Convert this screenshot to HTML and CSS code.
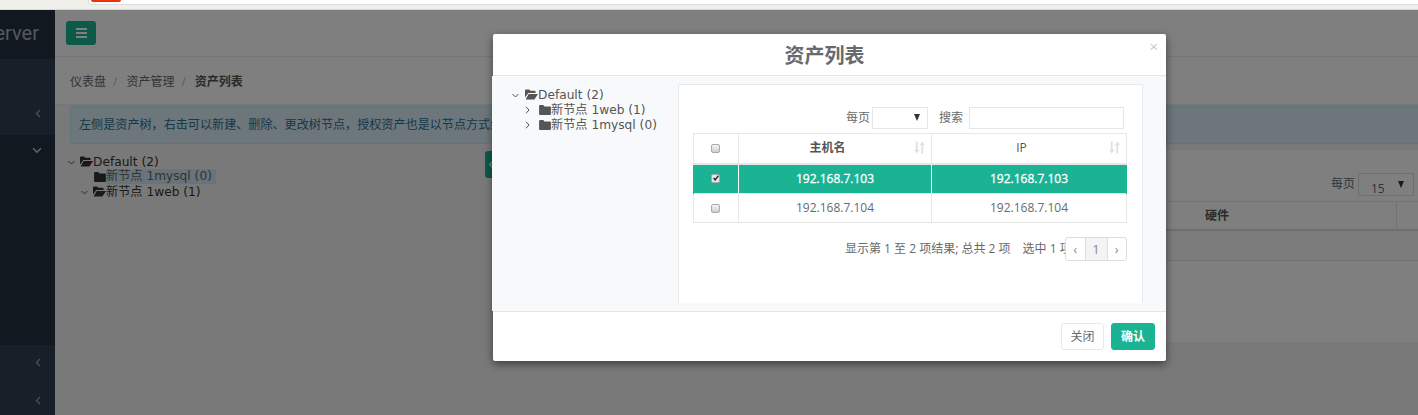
FILE: index.html
```html
<!DOCTYPE html>
<html lang="zh">
<head>
<meta charset="utf-8">
<title>资产列表</title>
<link rel="stylesheet" href="styles.css">
</head>
<body>
<svg class="defs" width="0" height="0" aria-hidden="true">
  <defs>
    <symbol id="folder-open" viewBox="0 0 14 11"><path d="M1 0h3.6l1.2 1.5h4.7c.5 0 .9.4.9.9V4H3.6L0 8.6V1c0-.6.4-1 1-1zM3.9 4.9H14L10.5 10.4c-.2.4-.6.6-1 .6H.6z"/></symbol>
    <symbol id="folder" viewBox="0 0 13 11"><path d="M1 0h3.6l1.3 1.6H12c.6 0 1 .4 1 1V10c0 .6-.4 1-1 1H1c-.6 0-1-.4-1-1V1c0-.6.4-1 1-1z"/></symbol>
    <symbol id="down" viewBox="0 0 7 5"><path d="M.5 1L3.5 4l3-3" fill="none" stroke="currentColor" stroke-width="1"/></symbol>
    <symbol id="right" viewBox="0 0 5 8"><path d="M1 .7L4 4 1 7.3" fill="none" stroke="currentColor" stroke-width="1"/></symbol>
    <symbol id="chev-down" viewBox="0 0 9 6"><path d="M1 1l3.5 3.5L8 1" fill="none" stroke="currentColor" stroke-width="1.3"/></symbol>
    <symbol id="left" viewBox="0 0 6 9"><path d="M5 1L1.5 4.5 5 8" fill="none" stroke="currentColor" stroke-width="1.3"/></symbol>
    <symbol id="sort" viewBox="0 0 12 13"><path d="M2 0h2v9h2l-3 4-3-4h2zM8 13h2V4h2L9 0 6 4h2z"/></symbol>
  </defs>
</svg>

<div class="browser-bar"><div class="address"><span class="favicon"></span></div></div>

<div class="app">
  <aside class="sidebar">
    <div class="logo">Jumpserver</div>
    <div class="nav-group">
      <div class="nav-item"><svg class="nav-icon"><use href="#left"/></svg></div>
    </div>
    <div class="nav-active">
      <div class="nav-item"><svg class="nav-icon-down"><use href="#chev-down"/></svg></div>
    </div>
    <div class="nav-group nav-rest">
      <div class="nav-item"><svg class="nav-icon"><use href="#left"/></svg></div>
      <div class="nav-item"><svg class="nav-icon"><use href="#left"/></svg></div>
    </div>
  </aside>

  <main class="main">
    <header class="topbar">
      <button class="menu-btn" type="button"><span></span><span></span><span></span></button>
    </header>
    <nav class="crumbs">
      <span>仪表盘</span><i>/</i><span>资产管理</span><i>/</i><strong>资产列表</strong>
    </nav>
    <div class="content">
      <div class="alert">左侧是资产树，右击可以新建、删除、更改树节点，授权资产也是以节点方式组织的，右侧是属于该节点下的资产</div>
      <div class="split">
        <div class="page-tree">
          <div class="tree-row"><svg class="arrow"><use href="#down"/></svg><svg class="ficon-o"><use href="#folder-open"/></svg>Default (2)</div>
          <div class="tree-row lvl"><svg class="ficon"><use href="#folder"/></svg><span class="picked">新节点 1mysql (0)</span></div>
          <div class="tree-row lvl-arrow"><svg class="arrow"><use href="#down"/></svg><svg class="ficon-o"><use href="#folder-open"/></svg>新节点 1web (1)</div>
        </div>
        <div class="toggle"><svg class="toggle-icon"><use href="#left"/></svg></div>
        <section class="panel">
          <div class="panel-tools">
            <span>每页</span><div class="page-select"><span class="val">15</span><b class="tri"></b></div>
          </div>
          <div class="back-table">
            <div class="back-head"><span class="hw">硬件</span><span class="last"></span></div>
            <div class="back-row"></div>
          </div>
        </section>
      </div>
    </div>
  </main>
</div>

<div class="backdrop"></div>

<div class="modal">
  <header class="modal-head">
    <h4>资产列表</h4>
    <span class="close">×</span>
  </header>
  <div class="modal-body">
    <div class="modal-tree">
      <div class="tree-row"><svg class="arrow"><use href="#down"/></svg><svg class="ficon-o"><use href="#folder-open"/></svg>Default (2)</div>
      <div class="tree-row sub"><svg class="arrow-r"><use href="#right"/></svg><svg class="ficon"><use href="#folder"/></svg>新节点 1web (1)</div>
      <div class="tree-row sub"><svg class="arrow-r"><use href="#right"/></svg><svg class="ficon"><use href="#folder"/></svg>新节点 1mysql (0)</div>
    </div>
    <div class="modal-panel">
      <div class="filters">
        <span>每页</span><div class="small-select"><b class="tri"></b></div>
        <span class="search-label">搜索</span><div class="search-box"></div>
      </div>
      <table class="grid">
        <thead>
          <tr>
            <th class="c-check"><span class="check"></span></th>
            <th class="c-host">主机名<svg class="sort"><use href="#sort"/></svg></th>
            <th>IP<svg class="sort"><use href="#sort"/></svg></th>
          </tr>
        </thead>
        <tbody>
          <tr class="selected">
            <td class="c-box"><span class="check on"><svg viewBox="0 0 10 10"><path d="M2 5l2 2.4L8 2" fill="none" stroke="#222" stroke-width="1.8"/></svg></span></td>
            <td>192.168.7.103</td><td>192.168.7.103</td>
          </tr>
          <tr>
            <td class="c-box"><span class="check"></span></td>
            <td>192.168.7.104</td><td>192.168.7.104</td>
          </tr>
        </tbody>
      </table>
      <div class="table-foot">
        <div class="info">显示第 1 至 2 项结果; 总共 2 项<span class="sel-count">选中 1 项</span></div>
        <div class="pager"><span>‹</span><span class="cur">1</span><span>›</span></div>
      </div>
    </div>
  </div>
  <footer class="modal-foot">
    <button class="btn" type="button">关闭</button>
    <button class="btn primary" type="button">确认</button>
  </footer>
</div>
</body>
</html>
```

FILE: styles.css
```css
* { box-sizing: border-box; }
html, body { height: 100%; }
body {
  margin: 0;
  width: 1418px;
  height: 415px;
  overflow: hidden;
  position: relative;
  display: flex;
  flex-direction: column;
  background: #f3f3f4;
  color: #676a6c;
  font: 13px/18px "Open Sans", "Noto Sans CJK SC", sans-serif;
}
.defs { position: absolute; }
svg { fill: currentColor; display: block; flex: none; }

/* browser strip */
.browser-bar { height: 10px; flex: none; background: #f0efeb; padding-left: 88px; border-bottom: 1px solid #d8d8d3; }
.address { height: 5px; background: #fff; border: 1px solid #dcdcdc; border-top: 0; border-radius: 0 0 4px 4px; width: 1340px; }
.favicon { display: block; width: 30px; height: 2px; background: #f0300a; margin-left: 2px; border-radius: 0 0 2px 2px; }

/* app */
.app { flex: 1; display: flex; min-height: 0; }
.sidebar { width: 55px; flex: none; background: #2f4050; color: #a7b1c2; display: flex; flex-direction: column; overflow: hidden; }
.logo { height: 49px; background: #243140; font: 20px/47px Roboto, sans-serif; white-space: nowrap; display: flex; justify-content: flex-end; padding-right: 16px; }
.nav-group { background: #2f4050; height: 76px; padding-top: 45px; }
.nav-active { background: #243140; height: 210px; }
.nav-rest { height: 70px; padding-top: 0; }
.nav-item { height: 38px; display: flex; align-items: center; justify-content: flex-end; padding-right: 14px; }
.nav-group .nav-item { color: #87a0c0; height: 19px; }
.nav-active .nav-item { color: #c4cbd6; padding-right: 13px; height: 30px; }
.nav-rest .nav-item { height: 38px; }
.nav-rest .nav-item:first-child { margin-top: -2px; }
.nav-icon { width: 6px; height: 9px; }
.nav-icon-down { width: 10px; height: 7px; }

.main { flex: 1; min-width: 0; display: flex; flex-direction: column; }
.topbar { height: 47px; flex: none; background: #fff; border-bottom: 1px solid #e7eaec; padding: 11px; }
.menu-btn { width: 30px; height: 24px; background: #1ab394; border: 0; border-radius: 3px; padding: 7px 9px 7px 10px; display: flex; flex-direction: column; gap: 2px; }
.menu-btn span { display: block; height: 2px; width: 100%; background: #fff; }
.crumbs { height: 48px; flex: none; background: #fff; border-bottom: 1px solid #e7eaec; padding: 2px 15px 0; display: flex; align-items: center; gap: 7px; font-size: 12px; color: #676a6c; }
.crumbs i { font-style: normal; color: #bbb; margin-right: 2px; }
.crumbs strong { font-weight: 700; color: #555; }
.content { flex: 1; min-height: 0; padding: 0 0 0 15px; }
.alert { height: 38px; margin-top: 1px; background: #d9edf7; border: 1px solid #bce8f1; border-radius: 3px; padding: 0 8px; line-height: 36px; font-size: 12.1px; color: #31708f; white-space: nowrap; overflow: hidden; margin-right: -4px; }
.split { display: flex; padding-top: 7px; align-items: flex-start; }
.page-tree { width: 417px; flex: none; padding-top: 3px; margin-left: -2px; }
.tree-row { height: 15px; display: flex; align-items: center; font: 12.2px/17px "DejaVu Sans", "Noto Sans CJK SC", sans-serif; color: #333; white-space: nowrap; padding-top: 1px; }
.arrow { width: 7px; height: 5px; color: #555; margin-right: 5px; }
.arrow-r { width: 5px; height: 8px; color: #555; margin-right: 9px; }
.ficon-o { width: 13px; height: 11px; color: #333; margin-top: -1px; }
.ficon { width: 12px; height: 10px; color: #333; margin-top: -1px; }
.lvl { padding-left: 26px; }
.lvl-arrow { padding-left: 13px; }
.picked { background: #d0e8f5; padding-right: 4px; color: #666; height: 15px; line-height: 15px; margin-top: -1px; }
.toggle { width: 8px; height: 27px; background: #1ab394; border-radius: 3px 0 0 3px; flex: none; padding: 9px 0 0 3px; color: #fff; }
.toggle-icon { width: 6px; height: 9px; }
.panel { flex: 1; min-width: 0; background: #fff; margin: -1px 0 0 4px; height: 192px; padding-top: 22px; }
.panel-tools { display: flex; justify-content: flex-end; align-items: center; height: 24px; padding-right: 4px; gap: 3px; font-size: 12px; }
.page-select { width: 56px; height: 23px; border: 1px solid #ddd; display: flex; justify-content: space-between; padding: 6px 9px 0 12px; font-size: 12px; }
.page-select .val { line-height: 18px; }
.page-select .tri { margin-top: 1px; }
.tri { display: block; width: 0; height: 0; border: 3.5px solid transparent; border-top: 7px solid #333; border-bottom: 0; }
.back-table { margin-top: 5px; }
.back-head { height: 30px; border-top: 1px solid #e7e7e7; border-bottom: 2px solid #ddd; position: relative; display: flex; font-weight: 700; font-size: 12px; justify-content: flex-end; }
.hw { line-height: 27px; margin-right: 189px; color: #555; }
.last { position: absolute; right: 21px; top: 0; bottom: 0; border-left: 1px solid #e7e7e7; }
.back-row { height: 30px; background: #f9f9f9; border-bottom: 1px solid #e7e7e7; }

/* overlay */
.backdrop { position: absolute; left: 0; right: 0; top: 10px; bottom: 0; background: rgba(0, 0, 0, .5); }
.modal { position: absolute; left: 493px; top: 34px; width: 673px; height: 327px; background: #fff; box-shadow: 0 3px 9px rgba(0, 0, 0, .5); display: flex; flex-direction: column; border-radius: 2px; }
.modal-head { height: 42px; flex: none; border-bottom: 1px solid #e5e5e5; position: relative; text-align: center; }
.modal-head h4 { margin: 0; padding-right: 10px; font-size: 20px; line-height: 43px; font-weight: 700; color: #676a6c; }
.close { position: absolute; right: 8px; top: 3px; font-size: 15px; line-height: 18px; color: #c9c9c9; }
.modal-body { height: 235px; flex: none; background: #f8f9fb; display: flex; margin-left: -1px; }
.modal-tree { width: 186px; flex: none; padding: 11px 0 0 20px; }
.modal-tree .tree-row { color: #555; }
.modal-tree .arrow { margin-right: 6px; }
.modal-tree .sub { padding-left: 13px; }
.modal-tree .ficon-o, .modal-tree .ficon { color: #555; }
.modal-panel { width: 465px; height: 219px; margin-top: 8px; background: #fff; border: 1px solid #e7eaec; border-bottom: 0; padding: 22px 15px 0 14px; }
.filters { display: flex; align-items: center; justify-content: flex-end; height: 23px; margin-top: -1px; padding-right: 3px; font-size: 12px; color: #676a6c; }
.small-select { width: 56px; height: 22px; margin-left: 2px; border: 1px solid #e5e6e7; display: flex; justify-content: flex-end; align-items: center; padding-right: 7px; }
.search-label { margin-left: 11px; }
.search-box { width: 155px; height: 22px; margin-left: 6px; border: 1px solid #e5e6e7; }
.grid { width: 434px; margin-top: 4px; border-collapse: collapse; table-layout: fixed; font-size: 12px; }
.grid th, .grid td { border: 1px solid #e7e7e7; text-align: center; padding: 0; height: 29px; }
.grid th { height: 30px; border-bottom: 2px solid #e7e7e7; position: relative; color: #555; font-weight: 700; padding-right: 15px; }
.grid th.c-check, .grid td.c-box { padding-right: 1px; }
.grid th:last-child { font-weight: 400; }
.c-check { width: 45px; }
.c-host { width: 193px; }
.sort { position: absolute; right: 6px; top: 7px; width: 11px; height: 13px; color: #e0e0e0; }
.grid .selected td { height: 30px; background: #1ab394; color: #fff; -webkit-text-stroke: .3px #fff; border-top: 0; border-left-color: #fff; border-right-color: #fff; border-bottom: 0; }
.grid .selected td:first-child { border-left-color: #1ab394; }
.grid .selected td:last-child { border-right-color: #1ab394; }
.check { display: block; width: 9px; height: 9px; margin: 0 auto; border: 1px solid #aaa; border-radius: 2px; background: linear-gradient(#f4f4f4, #cfcfcf); }
.check svg { width: 8px; height: 8px; margin: -1px 0 0 -.5px; }
.check.on { background: #e8e8e8; }
.table-foot { display: flex; justify-content: flex-end; position: relative; margin-top: 14px; height: 24px; font-size: 12px; color: #676a6c; white-space: nowrap; }
.info { position: absolute; left: 152px; top: 3px; }
.sel-count { margin-left: 12px; }
.pager { position: relative; display: flex; width: 62px; height: 24px; border: 1px solid #ddd; border-radius: 3px; background: #fff; font-size: 13px; }
.pager span { flex: 1; text-align: center; line-height: 22px; color: #888; border-left: 1px solid #ddd; }
.pager span:first-child { border-left: 0; }
.pager .cur { background: #f4f4f4; flex: 0 0 22px; }
.modal-foot { flex: 1; border-top: 1px solid #e5e5e5; display: flex; justify-content: flex-end; gap: 7px; padding: 11px 11px 0 0; }
.btn { height: 27px; width: 43px; background: #fff; border: 1px solid #e7eaec; border-radius: 3px; font: 12px/18px "Open Sans", "Noto Sans CJK SC", sans-serif; color: #676a6c; padding: 0; }
.btn.primary { width: 44px; background: #1ab394; border-color: #1ab394; color: #fff; font-weight: 700; }
```
